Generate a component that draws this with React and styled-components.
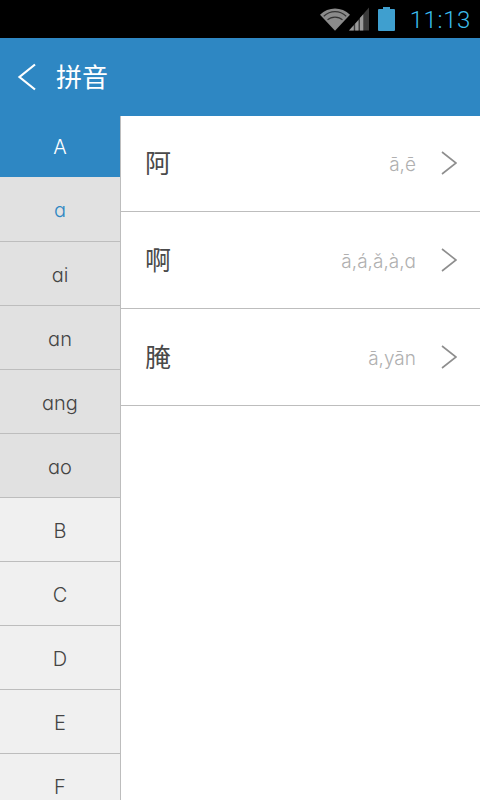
import React from "react";
import styled, { createGlobalStyle } from "styled-components";

const Global = createGlobalStyle`
  html, body { margin: 0; padding: 0; background: #fff; }
  body { font-family: Roboto, "Noto Sans CJK SC", sans-serif; }
`;
const Screen = styled.div`
  width: 480px; height: 800px; overflow: hidden; display: flex; flex-direction: column; background: #fff;
`;
const StatusBar = styled.div`
  height: 38px; flex: none; background: #000; display: flex; align-items: center; justify-content: flex-end;
  padding-right: 9px; box-sizing: border-box;
`;
const Clock = styled.span`
  font: 300 24px/38px Roboto, sans-serif; color: #3cbdec; margin-left: 15px; letter-spacing: 0.6px; padding-top: 2px;
`;
const Header = styled.div`
  height: 78px; flex: none; background: #2e87c3; display: flex; align-items: center; padding-left: 17px; gap: 19px;
`;
const Title = styled.h1`
  margin: 0 0 2px; font: 400 26px/1 "Noto Sans CJK SC", sans-serif; color: #fff;
`;
const Body = styled.div`
  flex: 1; display: flex; min-height: 0;
`;
const Side = styled.div`
  width: 121px; flex: none; box-sizing: border-box; border-right: 1px solid #bdbdbd; overflow: hidden;
  background: #f0f0f0;
`;
const SideItem = styled.div`
  box-sizing: border-box; height: ${p => p.$active ? 61 : p.$current ? 65 : 64}px;
  padding-top: ${p => p.$active ? 1 : 2}px;
  display: flex; align-items: center; justify-content: center;
  font: 300 20px/1 Inter, Roboto, sans-serif;
  color: ${p => p.$active ? "#fff" : p.$current ? "#2e87c3" : "#444"};
  background: ${p => p.$active ? "#2e87c3" : p.$sub ? "#e1e1e1" : "#f0f0f0"};
  border-bottom: ${p => p.$active ? "0" : "1px solid #bdbdbd"};
`;
const List = styled.div`
  flex: 1;
`;
const Row = styled.div`
  height: 97px; box-sizing: border-box; border-bottom: 1px solid #bdbdbd;
  display: flex; align-items: center; padding: 0 23px 2px 24px;
  &:first-child { height: 96px; padding-bottom: 3px; }
`;
const Han = styled.span`
  font: 400 26px/1 "Noto Sans CJK SC", sans-serif; color: #4a4a4a; flex: 1;
`;
const Pinyin = styled.span`
  font: 300 19px/1 Inter, Roboto, sans-serif; color: #b0b0b0; margin: 4px 25px 0 0;
`;
const ChevronIcon = styled.svg`
  margin-top: 2px;
`;

const Wifi = () => (
  <svg width="30" height="25" viewBox="0 0 32 26">
    <path d="M0 8 C9 -1 23 -1 32 8 L16 25 Z" fill="#8a8a8a" />
    <path d="M4 9.5 C11 3 21 3 28 9.5 M8 13.5 C12 9.5 20 9.5 24 13.5" stroke="#333" strokeWidth="1.2" fill="none" />
  </svg>
);
const Signal = () => (
  <svg width="20" height="24" viewBox="0 0 21 24" style={{ marginLeft: -1 }}>
    <path d="M0 24 L21 0 V24 Z" fill="#3a3a3a" />
    <path d="M0 24 L5 18.5 V24 Z M6.5 24 V17 L10 13 V24 Z M11.5 24 V11 L15 7 V24 Z" fill="#9a9a9a" />
  </svg>
);
const Battery = () => (
  <svg width="17" height="24" viewBox="0 0 17 24" style={{ marginLeft: 9 }}>
    <path d="M5 0 H12 V2 H16 Q17 2 17 3 V23 Q17 24 16 24 H1 Q0 24 0 23 V3 Q0 2 1 2 H5 Z" fill="#3f9fcf" />
  </svg>
);
const Back = () => (
  <svg width="20" height="28" viewBox="0 0 20 28">
    <path d="M18 1.5 L2.5 14 L18 26.5" stroke="#fff" strokeWidth="2.2" fill="none" />
  </svg>
);
const Chevron = () => (
  <ChevronIcon width="16" height="24" viewBox="0 0 16 24">
    <path d="M1 1 L15 12 L1 23" stroke="#8e8e8e" strokeWidth="1.6" fill="none" />
  </ChevronIcon>
);

const side = [
  ["A", { $active: true }], ["ɑ", { $sub: true, $current: true }], ["ɑi", { $sub: true }],
  ["ɑn", { $sub: true }], ["ɑng", { $sub: true }], ["ɑo", { $sub: true }],
  ["B", {}], ["C", {}], ["D", {}], ["E", {}], ["F", {}],
];
const rows = [["阿", "ā,ē"], ["啊", "ā,á,ǎ,à,ɑ"], ["腌", "ā,yān"]];

export default function App() {
  return (
    <Screen>
      <Global />
      <StatusBar><Wifi /><Signal /><Battery /><Clock>11:13</Clock></StatusBar>
      <Header><Back /><Title>拼音</Title></Header>
      <Body>
        <Side>
          {side.map(([t, p]) => <SideItem key={t} {...p}>{t}</SideItem>)}
        </Side>
        <List>
          {rows.map(([h, py]) => (
            <Row key={h}><Han>{h}</Han><Pinyin>{py}</Pinyin><Chevron /></Row>
          ))}
        </List>
      </Body>
    </Screen>
  );
}
